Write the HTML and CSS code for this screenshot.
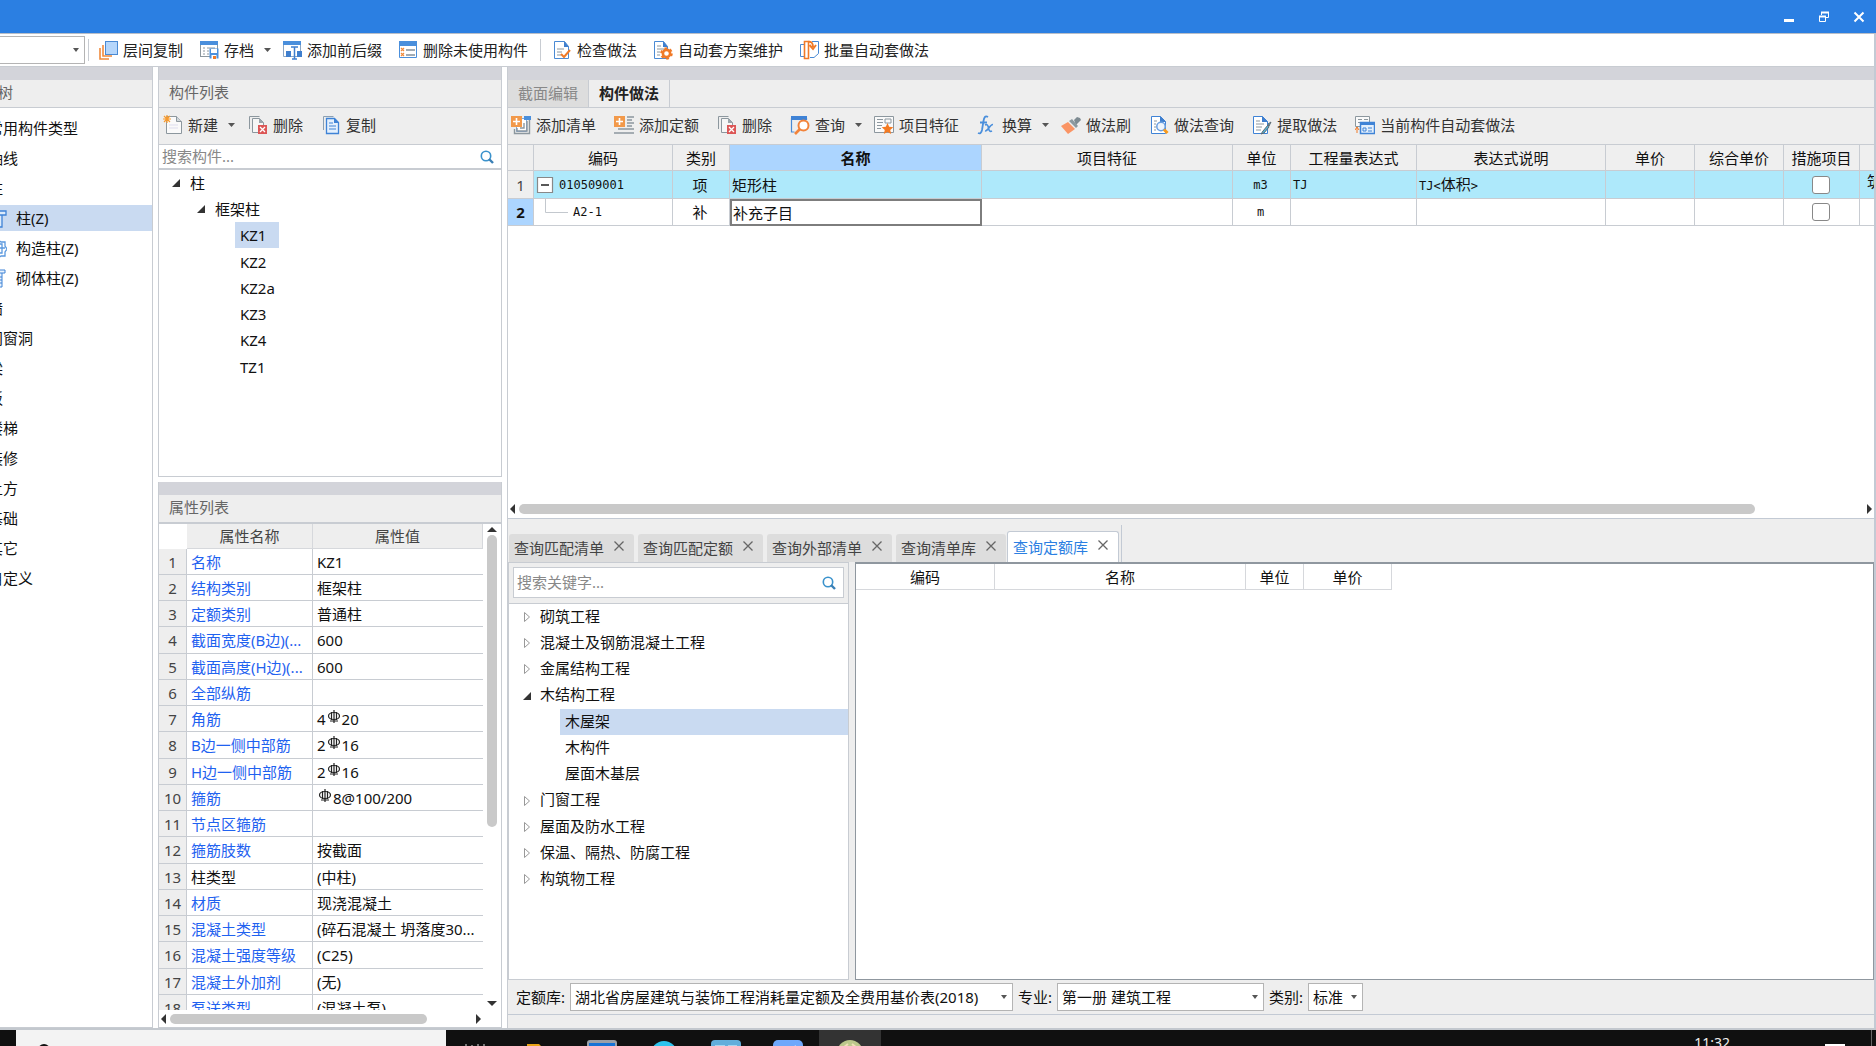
FILE: index.html
```html
<!DOCTYPE html>
<html lang="zh-CN">
<head>
<meta charset="utf-8">
<title>构件做法</title>
<link rel="stylesheet" href="styles.css">
</head>
<body>
<svg class="sprite" aria-hidden="true">
  <symbol id="i-layers" viewBox="0 0 20 20"><path d="M2 8v11h9M5 5v11h9" fill="none" stroke="#f08a3c" stroke-width="1.6"/><rect x="7.5" y="1.5" width="12" height="13" fill="#b5d6fb" stroke="#4a8ad4"/></symbol>
  <symbol id="i-archive" viewBox="0 0 20 20"><rect x="1.5" y="1.5" width="17" height="15" fill="#fff" stroke="#8c979e"/><path d="M1 1h18v4H1z" fill="#4a8fdc"/><path d="M4 8h2m2 0h8M4 11h2m2 0h2M4 14h2m2 0h2" stroke="#8c979e"/><path d="M10.5 8.500h9v10h-9z" fill="#4a8fdc"/><path d="M12 9h6v4h-6z" fill="#fff"/><path d="M12.500 15h5v4h-5z" fill="#fff"/><path d="M14 16h3v3h-3z" fill="#f07a28"/></symbol>
  <symbol id="i-affix" viewBox="0 0 20 20"><path d="M1.500 1.500h17v15h-17z" fill="#fff" stroke="#8ba6c4"/><path d="M1 1h18v4H1z" fill="#4a8fdc"/><path d="M4 11h5v6H4zM15 11h5v6h-5z" fill="#3f7fce"/><path d="M9 7h7M12.500 7v12M10 19h5" stroke="#3f7fce" stroke-width="1.500"/></symbol>
  <symbol id="i-unused" viewBox="0 0 20 20"><path d="M1.500 2.500h17v15h-17z" fill="#fff" stroke="#4a8fdc"/><path d="M1 1h18v5H1z" fill="#4a8fdc"/><path d="M3 8l3 3m0-3l-3 3m0 2l3 3m0-3l-3 3" stroke="#f08a3c" stroke-width="1.200"/><path d="M8 10h9M8 15h9" stroke="#84909a" stroke-width="1.400"/></symbol>
  <symbol id="i-check" viewBox="0 0 20 20"><path d="M2.500 1.500h10l4 5v12h-14z" fill="#fff" stroke="#4a8ad4"/><path d="M12 1v6h5z" fill="#3f7fce"/><path d="M5 9h7M5 12h5M5 15h4" stroke="#8c979e"/><path d="M9 14l3 3 6-7" fill="none" stroke="#f07a28" stroke-width="2"/></symbol>
  <symbol id="i-gear" viewBox="0 0 20 20"><path d="M1.500 1.500h9l4 5v12h-13z" fill="#fff" stroke="#4a8ad4"/><path d="M10 1v6h5z" fill="#3f7fce"/><path d="M4 6h4M4 9h7M4 12h3M4 15h3" stroke="#8c979e"/><circle cx="13.500" cy="13.500" r="5.300" fill="none" stroke="#f07a28" stroke-width="2" stroke-dasharray="2.700 2.850"/><circle cx="13.500" cy="13.500" r="3.600" fill="#fff" stroke="#f07a28" stroke-width="2.600"/></symbol>
  <symbol id="i-batch" viewBox="0 0 20 20"><path d="M5 4.500H1.500v12H5" fill="#fff" stroke="#4a8ad4"/><path d="M13 1.500h6.500v12L15 17.500h-4" fill="#fff" stroke="#4a8ad4"/><path d="M9.500 1.500h-4v17h4z" fill="#fff" stroke="#f07a28" stroke-width="1.600"/><path d="M9 2c4-1 5 2 5 5M10.500 5l3.500 4 3-4" fill="none" stroke="#f07a28" stroke-width="1.900"/></symbol>
  <symbol id="i-new" viewBox="0 0 20 20"><path d="M3.500 1.500h10l5 5v12h-15z" fill="#fafafa" stroke="#8c979e"/><path d="M13.500 1.500v5h5" fill="#cfd6da" stroke="#8c979e"/><path d="M6 10h9M6 13h9" stroke="#dde"/><path d="M4 0v8M0 4h8M1 1l6 6M7 1L1 7" stroke="#f79a2d" stroke-width="1.200"/></symbol>
  <symbol id="i-delete" viewBox="0 0 20 20"><path d="M1.500 14V1.500h10" fill="none" stroke="#8c979e"/><path d="M4.500 3.500h7l4 4v10h-11z" fill="#f6f6f6" stroke="#8c979e"/><path d="M11 3v5h5z" fill="#9aa5ab"/><path d="M10 10h9v9h-9z" fill="#dc5656"/><path d="M12 12l5 5m0-5l-5 5" stroke="#fff" stroke-width="1.300"/></symbol>
  <symbol id="i-copy" viewBox="0 0 20 20"><path d="M2.500 15V1.500h10" fill="none" stroke="#8ba0b4"/><path d="M5.500 3.500h8l4 4v11h-12z" fill="#e4f0fd" stroke="#3f83d6" stroke-width="1.300"/><path d="M13 3v5h5z" fill="#3f83d6"/><path d="M8 8h4M8 11h7M8 14h7" stroke="#3f83d6"/></symbol>
  <symbol id="i-addlist" viewBox="0 0 20 20"><path d="M5.500 3.500h10v13h-10z" fill="#fff" stroke="#7cabe0"/><path d="M13 1h7v4h-7z" fill="#4a8fdc"/><path d="M18.500 5v13.500H3.500V14M16 6v10H6v-3M13 8v5H9" fill="none" stroke="#8c979e" stroke-width="1.400"/><path d="M0 1h11v11H0z" fill="#f2994a"/><path d="M5.500 3v7M2 6.500h7" stroke="#fff" stroke-width="1.600"/></symbol>
  <symbol id="i-addquota" viewBox="0 0 20 20"><path d="M13 2h7M13 5h5M13 8h7M13 11h5M4 14h16M0 18h20" stroke="#8c979e" stroke-width="1.400"/><path d="M0 1h11v11H0z" fill="#f2994a"/><path d="M5.500 3v7M2 6.500h7" stroke="#fff" stroke-width="1.600"/></symbol>
  <symbol id="i-query" viewBox="0 0 20 20"><path d="M1.500 3v14h3M16.500 3v2" fill="none" stroke="#4a8ad4" stroke-width="1.200"/><path d="M1 1h16v4H1z" fill="#3f83d6"/><circle cx="13.500" cy="10.500" r="5" fill="#fff" stroke="#f2833a" stroke-width="2"/><path d="M10 14l-5 5" stroke="#f2833a" stroke-width="2.600"/></symbol>
  <symbol id="i-feature" viewBox="0 0 20 20"><path d="M.500 1.500h19v16H.500z" fill="#fafafa" stroke="#8c979e"/><path d="M3 4.500h6M3 7.500h6M3 10.500h5M3 13.500h4" stroke="#8c979e"/><path d="M11 4h6v4h-6z" fill="none" stroke="#8c979e"/><path d="M13.500 8l1.700 3.800 4.100.4-3.100 2.700 1 4.100-3.700-2.100L9.800 19l1-4.100-3.100-2.700 4.100-.4z" fill="#f47a22"/></symbol>
  <symbol id="i-fx" viewBox="0 0 20 20"><path d="M11 2c-3-2-4 1-4.500 4L5 15c-.6 3-2 4-4 3M3 7.500h7" fill="none" stroke="#4a8fdc" stroke-width="1.800"/><path d="M8 10c2-1 3 0 3.500 3s1.500 4 3.500 3M16 9.500c-3-.5-5 7-8 6.500" fill="none" stroke="#4a8fdc" stroke-width="1.600"/></symbol>
  <symbol id="i-brush" viewBox="0 0 20 20"><path d="M13 5l3-3 3 1 1 2-5 5z" fill="#7e8b92"/><path d="M8 6l3-2 6 7-2 2z" fill="#8c999f"/><path d="M7 7l7 7-7 5L0 11z" fill="#fa9464"/></symbol>
  <symbol id="i-find" viewBox="0 0 20 20"><path d="M2.500 1.500h9l5 5v12h-14z" fill="#fff" stroke="#3f83d6"/><path d="M11 1v6h6z" fill="#3f7fce"/><path d="M5 6h3M5 9h2M5 12h2M5 15h2" stroke="#8c979e"/><circle cx="12" cy="11.500" r="4.200" fill="#eef5fd" stroke="#6a9fe0" stroke-width="1.500"/><path d="M15 14.500l3.500 3.500" stroke="#f79a1d" stroke-width="3"/></symbol>
  <symbol id="i-extract" viewBox="0 0 20 20"><path d="M1.500 1.500h9l5 5v12h-14z" fill="#fff" stroke="#3f83d6"/><path d="M10 1v6h6z" fill="#3f7fce"/><path d="M4 6h4M4 9h8M4 12h6M4 15h5" stroke="#8c979e"/><path d="M19 7l-3 2 1 2zM16 10l-5 6-2 3 3-1 5-6z" fill="#56b4d8" stroke="#5c6a72"/></symbol>
  <symbol id="i-auto" viewBox="0 0 20 20"><path d="M.500 1.500h14v10H.500z" fill="#fafafa" stroke="#8c979e"/><path d="M3 4.500h4m2 0h4M3 7.500h3" stroke="#8c979e"/><path d="M2 12v6M0 15l2-3 2 3" stroke="#f07a28" fill="none"/><path d="M5.500 7.500h14v11h-14z" fill="#e3effc" stroke="#3f83d6" stroke-width="1.500"/><path d="M5 7h15v3H5z" fill="#3f83d6"/><path d="M8 13h3v3H8zM13 13h4M13 16h4" stroke="#3f83d6" fill="none"/></symbol>
  <symbol id="i-search" viewBox="0 0 14 14"><circle cx="6" cy="6" r="4.700" fill="none" stroke="#3a92cc" stroke-width="1.600"/><path d="M9 9l4 4" stroke="#3a7fb5" stroke-width="2.400"/></symbol>
  <symbol id="i-down" viewBox="0 0 10 6"><path d="M2 1h7L5.500 5z" fill="#555"/></symbol>
  <symbol id="i-open" viewBox="0 0 10 10"><path d="M9 1v8H1z" fill="#333"/></symbol>
  <symbol id="i-closed" viewBox="0 0 10 12"><path d="M2.500 1.500v9l5-4.500z" fill="#fff" stroke="#999"/></symbol>
  <symbol id="i-x" viewBox="0 0 12 12"><path d="M1.500 1.500l9 9m0-9l-9 9" stroke="#666" stroke-width="1.300"/></symbol>
  <symbol id="i-rebar" viewBox="0 0 14 14"><ellipse cx="7" cy="6" rx="5.500" ry="3.500" fill="none" stroke="#222" stroke-width="1.200"/><path d="M7 0v13M4.500 2v8M9.500 2v8M3 11h8" stroke="#222" stroke-width="1.200"/></symbol>
</svg>

<header class="titlebar">
  <button class="win" aria-label="最小化"><svg width="12" height="12"><path d="M1 9.500h10" stroke="#fff" stroke-width="3"/></svg></button>
  <button class="win" aria-label="还原"><svg width="12" height="12"><path d="M3.500 4V1.500h7v5H8" fill="none" stroke="#fff"/><path d="M3 1.500h8M1 5.500h7" stroke="#fff" stroke-width="2"/><path d="M1.500 5.500h6v5h-6z" fill="none" stroke="#fff"/></svg></button>
  <button class="win" aria-label="关闭"><svg width="12" height="12"><path d="M1.500 1.500l9 9m0-9l-9 9" stroke="#fff" stroke-width="2"/></svg></button>
</header>

<nav class="ribbon" aria-label="工具">
  <span class="drop-box floor"><select aria-label="楼层"><option></option></select></span>
  <i class="sep"></i>
  <button class="tool"><svg><use href="#i-layers"/></svg>层间复制</button>
  <button class="tool has-menu"><svg><use href="#i-archive"/></svg>存档<svg class="caret"><use href="#i-down"/></svg></button>
  <button class="tool"><svg><use href="#i-affix"/></svg>添加前后缀</button>
  <button class="tool"><svg><use href="#i-unused"/></svg>删除未使用构件</button>
  <i class="sep"></i>
  <button class="tool"><svg><use href="#i-check"/></svg>检查做法</button>
  <button class="tool"><svg><use href="#i-gear"/></svg>自动套方案维护</button>
  <button class="tool"><svg><use href="#i-batch"/></svg>批量自动套做法</button>
</nav>

<main class="work">
  <aside class="nav panel">
    <div class="grip"></div>
    <h2 class="nav-title">导航树</h2>
    <ul class="nav-tree">
      <li>常用构件类型</li>
      <li>轴线</li>
      <li>柱</li>
      <li class="sub on"><svg><path d="M1 3h17v4H1zM5 7v12h9V7M9 7v12" fill="#dcebfb" stroke="#3f83d6" stroke-width="1.300"/></svg>柱(Z)</li>
      <li class="sub"><svg><path d="M9 1l4 3h4v4l2 3-2 3v4h-4l-3 2-4-2H3v-4M5 6h9v9H5zM5 10h12M10 3v14" fill="none" stroke="#5a98de" stroke-width="1.300"/></svg>构造柱(Z)</li>
      <li class="sub"><svg><path d="M1 2h16v3H1zM5 5v14h9V5M5 9h9M5 12h9M5 15h9M10 5v14" fill="#eaf3fd" stroke="#3f83d6"/></svg>砌体柱(Z)</li>
      <li>墙</li>
      <li>门窗洞</li>
      <li>梁</li>
      <li>板</li>
      <li>楼梯</li>
      <li>装修</li>
      <li>土方</li>
      <li>基础</li>
      <li>其它</li>
      <li>自定义</li>
    </ul>
  </aside>

  <div class="middle">
    <section class="panel list">
      <div class="grip"></div>
      <h2>构件列表</h2>
      <div class="tools">
        <button class="tool has-menu"><svg><use href="#i-new"/></svg>新建<svg class="caret"><use href="#i-down"/></svg></button>
        <button class="tool"><svg><use href="#i-delete"/></svg>删除</button>
        <button class="tool"><svg><use href="#i-copy"/></svg>复制</button>
      </div>
      <label class="search"><input type="text" placeholder="搜索构件..." aria-label="搜索构件"><svg><use href="#i-search"/></svg></label>
      <ul class="tree">
        <li class="l1"><svg><use href="#i-open"/></svg><span>柱</span></li>
        <li class="l2"><svg><use href="#i-open"/></svg><span>框架柱</span></li>
        <li class="l3 on"><span>KZ1</span></li>
        <li class="l3"><span>KZ2</span></li>
        <li class="l3"><span>KZ2a</span></li>
        <li class="l3"><span>KZ3</span></li>
        <li class="l3"><span>KZ4</span></li>
        <li class="l3"><span>TZ1</span></li>
      </ul>
    </section>

    <section class="panel props">
      <div class="grip"></div>
      <h2>属性列表</h2>
      <div class="props-body">
        <div class="props-clip">
          <table class="props-table">
            <colgroup><col class="p-no"><col class="p-name"><col></colgroup>
            <thead><tr><th class="corner"></th><th>属性名称</th><th>属性值</th></tr></thead>
            <tbody>
              <tr><th>1</th><td>名称</td><td>KZ1</td></tr>
              <tr><th>2</th><td>结构类别</td><td>框架柱</td></tr>
              <tr><th>3</th><td>定额类别</td><td>普通柱</td></tr>
              <tr><th>4</th><td>截面宽度(B边)(...</td><td>600</td></tr>
              <tr><th>5</th><td>截面高度(H边)(...</td><td>600</td></tr>
              <tr><th>6</th><td>全部纵筋</td><td></td></tr>
              <tr><th>7</th><td>角筋</td><td>4<svg><use href="#i-rebar"/></svg>20</td></tr>
              <tr><th>8</th><td>B边一侧中部筋</td><td>2<svg><use href="#i-rebar"/></svg>16</td></tr>
              <tr><th>9</th><td>H边一侧中部筋</td><td>2<svg><use href="#i-rebar"/></svg>16</td></tr>
              <tr><th>10</th><td>箍筋</td><td><svg><use href="#i-rebar"/></svg>8@100/200</td></tr>
              <tr><th>11</th><td>节点区箍筋</td><td></td></tr>
              <tr><th>12</th><td>箍筋肢数</td><td>按截面</td></tr>
              <tr><th>13</th><td class="plain">柱类型</td><td>(中柱)</td></tr>
              <tr><th>14</th><td>材质</td><td>现浇混凝土</td></tr>
              <tr><th>15</th><td>混凝土类型</td><td>(碎石混凝土 坍落度30...</td></tr>
              <tr><th>16</th><td>混凝土强度等级</td><td>(C25)</td></tr>
              <tr><th>17</th><td>混凝土外加剂</td><td>(无)</td></tr>
              <tr><th>18</th><td>泵送类型</td><td>(混凝土泵)</td></tr>
            </tbody>
          </table>
        </div>
        <div class="vbar"><i class="arrow-up"></i><b></b><i class="arrow-down"></i></div>
      </div>
      <div class="hbar"><i class="arrow-left"></i><span><b></b></span><i class="arrow-right"></i></div>
    </section>
  </div>

  <div class="right">
    <section class="method">
      <div class="grip"></div>
      <div class="mode-tabs">
        <button>截面编辑</button><button class="on">构件做法</button>
      </div>
      <div class="tools">
        <button class="tool"><svg><use href="#i-addlist"/></svg>添加清单</button>
        <button class="tool"><svg><use href="#i-addquota"/></svg>添加定额</button>
        <button class="tool"><svg><use href="#i-delete"/></svg>删除</button>
        <button class="tool has-menu"><svg><use href="#i-query"/></svg>查询<svg class="caret"><use href="#i-down"/></svg></button>
        <button class="tool"><svg><use href="#i-feature"/></svg>项目特征</button>
        <button class="tool has-menu"><svg><use href="#i-fx"/></svg>换算<svg class="caret"><use href="#i-down"/></svg></button>
        <button class="tool"><svg><use href="#i-brush"/></svg>做法刷</button>
        <button class="tool"><svg><use href="#i-find"/></svg>做法查询</button>
        <button class="tool"><svg><use href="#i-extract"/></svg>提取做法</button>
        <button class="tool"><svg><use href="#i-auto"/></svg>当前构件自动套做法</button>
      </div>
      <div class="grid-clip">
        <table class="grid">
          <colgroup><col class="c-no"><col class="c-code"><col class="c-kind"><col class="c-name"><col class="c-feat"><col class="c-unit"><col class="c-expr"><col class="c-desc"><col class="c-price"><col class="c-price"><col class="c-meas"><col></colgroup>
          <thead><tr><th></th><th>编码</th><th>类别</th><th class="on">名称</th><th>项目特征</th><th>单位</th><th>工程量表达式</th><th>表达式说明</th><th>单价</th><th>综合单价</th><th>措施项目</th><th></th></tr></thead>
          <tbody>
            <tr class="item"><th>1</th><td><div class="code"><svg class="fold"><path d="M1.500 1.500h15v15h-15z" fill="#fff" stroke="#888" stroke-width="1.200"/><path d="M5 9h8" stroke="#222" stroke-width="1.500"/></svg><span class="mono">010509001</span></div></td><td class="mid">项</td><td>矩形柱</td><td></td><td class="mid mono">m3</td><td class="mono">TJ</td><td><span class="mono">TJ&lt;</span>体积<span class="mono">&gt;</span></td><td></td><td></td><td class="mid"><input type="checkbox" aria-label="第1行措施项目"></td><td class="cut">筑</td></tr>
            <tr><th class="on">2</th><td><div class="code"><svg class="branch"><path d="M9.500 0v13.500H32" fill="none" stroke="#c3c8ce"/></svg><span class="mono">A2-1</span></div></td><td class="mid">补</td><td class="focus">补充子目</td><td></td><td class="mid mono">m</td><td></td><td></td><td></td><td></td><td class="mid"><input type="checkbox" aria-label="第2行措施项目"></td><td></td></tr>
          </tbody>
        </table>
      </div>
      <div class="hbar wide"><i class="arrow-left"></i><span><b></b></span><i class="arrow-right"></i></div>
    </section>

    <section class="query">
      <div class="query-tabs">
        <div class="qtab"><button>查询匹配清单</button><button class="x" aria-label="关闭"><svg><use href="#i-x"/></svg></button></div>
        <div class="qtab"><button>查询匹配定额</button><button class="x" aria-label="关闭"><svg><use href="#i-x"/></svg></button></div>
        <div class="qtab"><button>查询外部清单</button><button class="x" aria-label="关闭"><svg><use href="#i-x"/></svg></button></div>
        <div class="qtab"><button>查询清单库</button><button class="x" aria-label="关闭"><svg><use href="#i-x"/></svg></button></div>
        <div class="qtab on"><button>查询定额库</button><button class="x" aria-label="关闭"><svg><use href="#i-x"/></svg></button></div>
        <i class="tab-end"></i>
      </div>
      <div class="query-body">
        <div class="lib">
          <div class="lib-search"><label class="search boxed"><input type="text" placeholder="搜索关键字..." aria-label="搜索关键字"><svg><use href="#i-search"/></svg></label></div>
          <ul class="tree lib-tree">
            <li><svg><use href="#i-closed"/></svg><span>砌筑工程</span></li>
            <li><svg><use href="#i-closed"/></svg><span>混凝土及钢筋混凝土工程</span></li>
            <li><svg><use href="#i-closed"/></svg><span>金属结构工程</span></li>
            <li><svg><use href="#i-open"/></svg><span>木结构工程</span></li>
            <li class="leaf on"><span>木屋架</span></li>
            <li class="leaf"><span>木构件</span></li>
            <li class="leaf"><span>屋面木基层</span></li>
            <li><svg><use href="#i-closed"/></svg><span>门窗工程</span></li>
            <li><svg><use href="#i-closed"/></svg><span>屋面及防水工程</span></li>
            <li><svg><use href="#i-closed"/></svg><span>保温、隔热、防腐工程</span></li>
            <li><svg><use href="#i-closed"/></svg><span>构筑物工程</span></li>
          </ul>
        </div>
        <div class="result">
          <table>
            <colgroup><col class="r-code"><col class="r-name"><col class="r-unit"><col class="r-price"></colgroup>
            <thead><tr><th>编码</th><th>名称</th><th>单位</th><th>单价</th></tr></thead>
          </table>
        </div>
      </div>
      <div class="filters">
        <label for="lib">定额库:</label>
        <span class="drop-box lib-select"><select id="lib"><option>湖北省房屋建筑与装饰工程消耗量定额及全费用基价表(2018)</option></select></span>
        <label for="major">专业:</label>
        <span class="drop-box major-select"><select id="major"><option>第一册 建筑工程</option></select></span>
        <label for="kind">类别:</label>
        <span class="drop-box kind-select"><select id="kind"><option>标准</option></select></span>
      </div>
    </section>
    <div class="status"></div>
  </div>
</main>

<footer class="taskbar">
  <div class="task-search"><svg width="12" height="12"><circle cx="6" cy="6" r="5" fill="none" stroke="#111" stroke-width="2"/></svg></div>
  <svg class="task-view" width="24" height="4"><path d="M2 0v4M8 1v3M14 0v4M20 0v4" stroke="#ddd"/></svg>
  <div class="apps">
    <div class="app"><svg width="30" height="16"><path d="M2 4h12l2 2h12v10H2z" fill="#e8a317"/><path d="M14 6h14v10H14z" fill="#f7d67a"/></svg></div>
    <div class="app"><svg width="30" height="16"><rect width="30" height="30" rx="3" fill="#9aa0a8"/><path d="M2 3h26v13H2z" fill="#1673d6"/></svg></div>
    <div class="app"><svg width="30" height="16"><circle cx="15" cy="14" r="13" fill="#2cc4ee"/></svg></div>
    <div class="app"><svg width="30" height="16"><rect width="30" height="30" rx="4" fill="#62aedb"/><path d="M4 6h10M17 6h9" stroke="#a6d6f0" stroke-width="2"/></svg></div>
    <div class="app"><svg width="30" height="16"><rect width="30" height="30" rx="5" fill="#6ea8fb"/><path d="M8 14L23 5l-4 11" fill="#d6e7ff"/></svg></div>
    <div class="app on"><svg width="30" height="16"><circle cx="15" cy="13" r="13" fill="#bcc88c"/><path d="M8 8l5-4M17 4l5 4" stroke="#f0e2b8" stroke-width="2"/></svg></div>
  </div>
  <time>11:32</time>
  <i class="notice"></i>
  <i class="desk"></i>
</footer>
</body>
</html>
```

FILE: styles.css
```css
* { box-sizing: border-box; }
body {
  margin: 0;
  height: 100vh;
  display: flex;
  flex-direction: column;
  overflow: hidden;
  background: #fff;
  color: #111;
  font: 15px/20px "Noto Sans", "Noto Sans CJK SC", sans-serif;
}
button, input, select { font: inherit; color: inherit; margin: 0; padding: 0; border: 0; background: none; }
h2, ul { margin: 0; padding: 0; list-style: none; font: inherit; }
svg { flex: none; display: block; }
table { border-collapse: separate; border-spacing: 0; table-layout: fixed; }
th { font-weight: 400; padding: 0; }
td { padding: 0; }
.sprite { position: absolute; width: 0; height: 0; }

/* Title bar */
.titlebar { flex: none; height: 34px; display: flex; justify-content: flex-end; align-items: center; gap: 23px; padding-right: 11px; background: #2b7fe2; border-bottom: 1px solid #b8bec8; }
.win { width: 12px; height: 12px; }

/* Ribbon and tool rows */
.ribbon { flex: none; height: 33px; display: flex; align-items: center; border-bottom: 1px solid #c8ccd2; border-right: 2px solid #c3cad4; }
.tool { display: flex; align-items: center; gap: 5px; margin-right: 18px; white-space: nowrap; color: #333; }
.tool svg { width: 20px; height: 20px; }
.tool .caret { width: 10px; height: 6px; margin-left: 3px; }
.tool.has-menu { margin-right: 12px; }
.ribbon .tool { margin-right: 16px; color: #222; }
.ribbon .tool.has-menu { margin-right: 10px; }
.sep { width: 1px; height: 22px; margin: 0 9px 0 3px; background: #c8ccd2; }
.ribbon .tool + .sep { margin: 0 11px 0 -4px; }
.drop-box { position: relative; display: block; height: 28px; border: 1px solid #b4b4b4; background: #fff; }
.drop-box select { appearance: none; width: 100%; height: 100%; padding-left: 4px; outline: 0; }
.drop-box::after { content: ""; position: absolute; right: 5px; top: 11px; border: 3px solid transparent; border-top: 4px solid #555; border-bottom: 0; }
.floor { width: 85px; border-left: 0; }

/* Frame */
.work { flex: 1; min-height: 0; display: flex; gap: 5px; border-bottom: 2px solid #c3c8ce; }
.grip { flex: none; height: 13px; background: #d3d4da; }
.panel { display: flex; flex-direction: column; border: 1px solid #c8ccd2; border-top: 0; min-height: 0; }
.panel h2 { flex: none; height: 28px; line-height: 25px; padding-left: 10px; background: #eee; border-bottom: 1px solid #c8ccd2; color: #666; }

/* Navigation tree, scrolled past its left edge */
.nav { flex: none; width: 153px; border-left: 0; overflow: hidden; }
.nav .nav-title { padding: 0; text-indent: -32px; }
.nav-tree { margin-left: -12px; padding-top: 5px; display: flex; flex-direction: column; }
.nav-tree li { flex: none; height: 30px; line-height: 30px; display: flex; align-items: center; }
.nav-tree .sub { height: 26px; line-height: 26px; margin: 2px 0; gap: 9px; }
.nav-tree .sub svg { width: 19px; height: 20px; }
.nav-tree .on { background: #c9daf1; }

/* Component list */
.middle { flex: none; width: 344px; display: flex; flex-direction: column; gap: 5px; }
.list { flex: none; height: 410px; }
.tools { flex: none; height: 37px; display: flex; align-items: center; padding: 0 0 2px 4px; background: #eee; border-bottom: 1px solid #c8ccd2; }
.search { flex: none; height: 25px; display: flex; align-items: center; padding: 0 7px 0 3px; border-bottom: 2px solid #c8ccd2; }
.search input { flex: 1; min-width: 0; height: 22px; padding-bottom: 2px; outline: 0; }
.search input::placeholder { color: #888; opacity: 1; }
.search svg { width: 14px; height: 14px; }
.tree li { height: 26px; line-height: 26px; display: flex; align-items: center; gap: 9px; white-space: nowrap; }
.tree li:nth-child(4n) { height: 27px; }
.tree svg { width: 10px; height: 12px; }
.list .l1 { padding-left: 12px; }
.list .l2 { padding-left: 37px; }
.list .l3 { padding-left: 76px; }
.list .l3 span { padding: 0 13px 0 5px; }
.list .on span { background: #c9daf1; }

/* Property table */
.props { flex: 1; }
.props h2 { height: 29px; border-bottom-width: 2px; }
.props-body { flex: 1; min-height: 0; display: flex; }
.props-clip { flex: 1; min-width: 0; overflow: hidden; }
.props-table { width: 100%; }
.p-no { width: 28px; }
.p-name { width: 126px; }
.props-table tr { height: 26px; }
.props-table tbody tr:nth-child(4n) { height: 27px; }
.props-table th { background: #eee; color: #444; border-right: 1px solid #c8ccd2; border-bottom: 1px solid #c8ccd2; }
.props-table thead tr { height: 25px; }
.props-table thead th { border-color: #d6d8dc; line-height: 24px; }
.props-table thead .corner { background: #fff; border-color: #fff; }
.props-table td { border-bottom: 1px solid #c8ccd2; padding-left: 4px; white-space: nowrap; overflow: hidden; text-overflow: ellipsis; }
.props-table td:nth-child(2) { color: #1f62f0; border-right: 1px solid #c8ccd2; }
.props-table td.plain:nth-child(2) { color: #111; }
.props-table td svg { display: inline-block; width: 14px; height: 14px; margin: 0 1px; vertical-align: 1px; }
.vbar { flex: none; width: 18px; display: flex; flex-direction: column; align-items: center; padding-top: 3px; }
.vbar b { width: 10px; height: 292px; margin-top: 3px; border-radius: 5px; background: #c9c9c9; }
.arrow-up, .arrow-down, .arrow-left, .arrow-right { flex: none; border: 5px solid transparent; }
.arrow-up { border-top: 0; border-bottom-color: #333; }
.arrow-down { border-bottom: 0; border-top-color: #333; margin: auto 0 4px; }
.arrow-left { border-left: 0; border-right-color: #333; }
.arrow-right { border-right: 0; border-left-color: #333; }
.hbar { flex: none; height: 17px; display: flex; align-items: center; padding: 0 20px 0 2px; }
.hbar span { flex: 1; padding: 0 4px; }
.hbar b { display: block; width: 85%; height: 10px; border-radius: 5px; background: #c9c9c9; }

/* Method editor */
.right { flex: 1; min-width: 0; display: flex; flex-direction: column; border-left: 1px solid #c8ccd2; border-right: 2px solid #c3cad4; }
.method { flex: none; height: 452px; display: flex; flex-direction: column; border-bottom: 1px solid #c3cad4; }
.mode-tabs { flex: none; height: 28px; display: flex; background: #eee; border-bottom: 1px solid #c8ccd2; }
.mode-tabs button { width: 81px; padding-bottom: 2px; color: #888; background: #ddd; border-right: 1px solid #c8ccd2; }
.mode-tabs .on { color: #222; background: #eee; font-weight: 700; }
.method .tools { padding-left: 3px; }
.method .has-menu { margin-right: 11px; }
.grid-clip { flex: 1; min-height: 0; overflow: hidden; }
.grid { width: 100%; }
.c-no { width: 26px; } .c-code { width: 139px; } .c-kind { width: 57px; } .c-name { width: 252px; }
.c-feat { width: 251px; } .c-unit { width: 58px; } .c-expr { width: 126px; } .c-desc { width: 189px; }
.c-price { width: 89px; } .c-meas { width: 76px; }
.grid th, .grid td { border-right: 1px solid #c8ccd2; border-bottom: 1px solid #c8ccd2; white-space: nowrap; overflow: hidden; }
.grid thead th { height: 26px; background: #efefef; }
.grid tbody tr { height: 27px; }
.grid tbody .item { height: 28px; }
.grid tbody th { background: #efefef; color: #444; }
.grid th.on { background: #acd5ff; font-weight: 700; color: #111; }
.grid td { padding-left: 2px; }
.grid .item td { background: #aee9fb; }
.grid .mid { text-align: center; padding: 0 2px 0 0; }
.grid th:last-child, .grid td:last-child { border-right: 0; }
.grid .focus { border: 2px solid #7d7d7d; padding-left: 1px; line-height: 18px; }
.grid .cut { padding: 0 0 8px 7px; line-height: 18px; }
.mono { font-family: "DejaVu Sans Mono", monospace; font-size: 12px; }
.code { display: flex; align-items: center; height: 26px; gap: 5px; }
.fold { width: 18px; height: 18px; }
.branch { width: 32px; height: 26px; }
.grid input { display: block; appearance: none; width: 18px; height: 18px; margin: 0 auto; border: 1px solid #888; border-radius: 3px; background: #fff; }
.hbar.wide { height: 19px; padding: 0 2px; }
.wide b { width: 92%; }

/* Library query */
.query { flex: 1; min-height: 0; display: flex; flex-direction: column; background: #eee; border-bottom: 1px solid #c3cad4; }
.query-tabs { flex: none; height: 43px; display: flex; align-items: flex-end; gap: 4px; padding-left: 1px; }
.qtab { height: 28px; display: flex; align-items: center; gap: 9px; padding: 0 9px 0 5px; background: #ddd; border-radius: 3px 3px 0 0; color: #444; white-space: nowrap; }
.qtab svg { width: 12px; height: 12px; }
.qtab .x { padding-bottom: 5px; }
.qtab.on { height: 31px; margin-left: -3px; background: #fff; border: 1px solid #c3cad4; border-bottom: 0; color: #2b7fe2; }
.tab-end { width: 1px; height: 37px; margin-left: -2px; background: #c3cad4; }
.query-body { flex: 1; min-height: 0; display: flex; gap: 6px; }
.lib { flex: none; width: 341px; display: flex; flex-direction: column; background: #fff; border: 1px solid #c8ccd2; }
.lib-search { background: #eee; padding: 4px 4px 5px; border-bottom: 1px solid #c8ccd2; }
.search.boxed { height: 31px; padding-left: 3px; background: #fff; border: 1px solid #c8ccd2; }
.lib-tree li { padding-left: 13px; gap: 8px; }
.lib-tree span { line-height: 22px; padding-bottom: 3px; }
.lib-tree .leaf { margin-left: 51px; padding-left: 5px; }
.lib-tree .on { background: #c9daf1; }
.result { flex: 1; min-width: 0; background: #fff; border: 1px solid #8f979f; border-top-width: 2px; }
.result th { height: 26px; border-right: 1px solid #d6d8dc; border-bottom: 1px solid #d6d8dc; }
.result table { width: 536px; }
.r-code { width: 139px; } .r-name { width: 251px; } .r-unit { width: 58px; } .r-price { width: 88px; }
.filters { flex: none; height: 34px; display: flex; align-items: center; gap: 5px; padding-left: 8px; white-space: nowrap; }
.lib-select { width: 443px; }
.major-select { width: 207px; }
.kind-select { width: 55px; }
.status { flex: none; height: 13px; background: #eee; }

/* System task bar */
.taskbar { flex: none; height: 16px; display: flex; align-items: flex-start; padding-left: 16px; background: #101010; color: #eee; overflow: hidden; }
.task-search { width: 430px; height: 16px; padding: 14px 0 0 22px; background: #f3f3f3; overflow: hidden; }
.task-view { margin: 14px 21px 0 18px; }
.apps { display: flex; }
.app { width: 62px; height: 16px; }
.app svg { margin: 10px auto 0; }
.app.on { background: #333; }
.taskbar time { margin-left: auto; font-size: 14px; line-height: 26px; }
.notice { width: 20px; height: 2px; margin: 14px 26px 0 95px; background: #fff; }
.desk { width: 1px; height: 16px; margin-right: 4px; background: #666; }
```
